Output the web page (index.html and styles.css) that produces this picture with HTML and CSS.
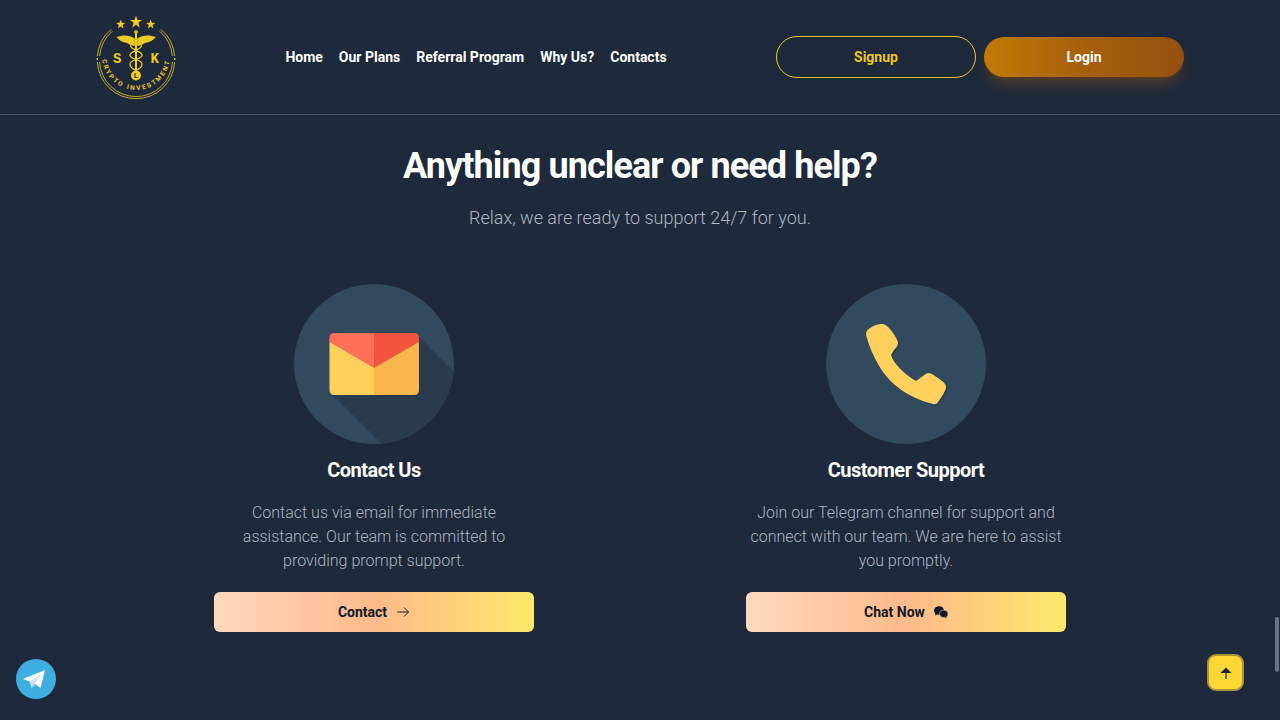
FILE: index.html
```html
<!DOCTYPE html>
<html lang="en">
<head>
<meta charset="utf-8">
<title>Support</title>
<link rel="stylesheet" href="styles.css">
</head>
<body>
<header class="header">
  <svg class="logo" viewBox="0 0 80 84" aria-label="SK Crypto Investment logo">
    <defs><path id="logo-arc" d="M6 41 A34 34 0 1 0 74 41"/></defs>
    <g fill="#eecb22">
      <polygon points="40,0.500 41.500,5 46,5 42.400,7.800 43.700,12.500 40,9.700 36.300,12.500 37.600,7.800 34,5 38.500,5"/>
      <polygon points="24.700,4.500 25.900,7.800 29.300,8 26.600,10.100 27.500,13.500 24.700,11.500 21.900,13.500 22.800,10.100 20.100,8 23.500,7.800"/>
      <polygon points="54.700,4.500 55.900,7.800 59.300,8 56.600,10.100 57.500,13.500 54.700,11.500 51.900,13.500 52.800,10.100 50.100,8 53.500,7.800"/>
      <path d="M20.500 22 C27 19.500 34 20 38.800 23.500 L38.800 31 C36 30.500 33 29.500 31 28 C27 27.500 23 25.500 20.500 22 Z"/>
      <path d="M60 22 C53 19.500 46 20 41.200 23.500 L41.200 31 C44 30.500 47 29.500 49 28 C53 27.500 57 25.500 60 22 Z"/>
      <rect x="39" y="17" width="2" height="40"/>
      <circle cx="40" cy="17" r="1.800"/>
      <circle cx="40" cy="60.500" r="5"/>
      <circle cx="1.300" cy="44" r="0.900"/>
      <circle cx="78.700" cy="44" r="0.900"/>
    </g>
    <g fill="none" stroke="#eecb22">
      <path stroke-width="1.300" d="M35 30 C32 34 46 36 46 40 C46 45 34 44 34 49 C34 52 37 54 39 55"/>
      <path stroke-width="1.300" d="M45 30 C48 34 34 36 34 40 C34 45 46 44 46 49 C46 52 43 54 41 55"/>
      <path stroke-width="0.800" d="M15 14.500 A38.700 38.700 0 0 0 1.350 41"/>
      <path stroke-width="0.800" d="M65 14.500 A38.700 38.700 0 0 1 78.650 41"/>
      <path stroke-width="0.800" d="M16.400 16.200 A36.500 36.500 0 0 0 3.550 41"/>
      <path stroke-width="0.800" d="M63.600 16.200 A36.500 36.500 0 0 1 76.450 41"/>
      <path stroke-width="0.800" d="M1.350 47 A38.700 38.700 0 0 0 78.650 47"/>
      <path stroke-width="0.800" d="M3.550 47 A36.500 36.500 0 0 0 76.450 47"/>
    </g>
    <text class="logo-letter" x="21.300" y="47.500">S</text>
    <text class="logo-letter" x="58.700" y="47.500">K</text>
    <text class="logo-ball" x="40" y="63">L</text>
    <text class="logo-arc-text"><textPath href="#logo-arc" startOffset="50%" text-anchor="middle">CRYPTO INVESTMENT</textPath></text>
  </svg>
  <nav class="nav">
    <a href="#">Home</a>
    <a href="#">Our Plans</a>
    <a href="#">Referral Program</a>
    <a href="#">Why Us?</a>
    <a href="#">Contacts</a>
  </nav>
  <div class="auth">
    <a class="btn-signup" href="#">Signup</a>
    <a class="btn-login" href="#">Login</a>
  </div>
</header>

<main class="main">
  <h1 class="title">Anything unclear or need help?</h1>
  <p class="subtitle">Relax, we are ready to support 24/7 for you.</p>
  <section class="cards">
    <article class="card">
      <svg class="card-icon" viewBox="0 0 160 160">
        <defs><clipPath id="disc"><circle cx="80" cy="80" r="80"/></clipPath></defs>
        <circle cx="80" cy="80" r="80" fill="#324a5e"/>
        <polygon clip-path="url(#disc)" fill="#2b3b4e" points="123,51 200,128 200,200 128,200 37,109"/>
        <path fill="#ffd15c" d="M80 55 L35.500 55 L35.500 106 Q35.500 111 40.500 111 L80 111 Z"/>
        <path fill="#f8b64c" d="M80 55 L125 55 L125 106 Q125 111 120 111 L80 111 Z"/>
        <path fill="#ff7058" d="M80 49 L40.500 49 Q35.500 49 35.500 54 L35.500 58 L80 84 Z"/>
        <path fill="#f1543f" d="M80 49 L120 49 Q125 49 125 54 L125 58 L80 84 Z"/>
      </svg>
      <h2 class="card-title">Contact Us</h2>
      <p class="card-text">Contact us via email for immediate assistance. Our team is committed to providing prompt support.</p>
      <a class="card-btn" href="#">Contact
        <svg class="btn-icon" viewBox="0 0 14 14"><path d="M1.500 7 H12.500 M8 2.500 L12.500 7 L8 11.500" fill="none" stroke="#111827" stroke-width="1"/></svg>
      </a>
    </article>
    <article class="card">
      <svg class="card-icon" viewBox="0 0 160 160">
        <circle cx="80" cy="80" r="80" fill="#324a5e"/>
        <path class="phone-shadow" d="M40 50 C40 47 42 45 45 43.500 C48 41.500 52 40 56 40 C59 40 61 42 63 44 C67 48 70 53 72 58 C72.500 61 70 64 68 66 L65 71 C68 80 78 90 90 97 C94 95 98 90 102 89 C106 89 112 94 116 97 C119 99 120 101 120 104 C119 108 115 114 112 118 C111 120 109 120.500 107 120 C88 115 68 105 55 85 C47 72 42 60 40 50 Z"/>
        <path fill="#ffd15c" d="M40 50 C40 47 42 45 45 43.500 C48 41.500 52 40 56 40 C59 40 61 42 63 44 C67 48 70 53 72 58 C72.500 61 70 64 68 66 L65 71 C68 80 78 90 90 97 C94 95 98 90 102 89 C106 89 112 94 116 97 C119 99 120 101 120 104 C119 108 115 114 112 118 C111 120 109 120.500 107 120 C88 115 68 105 55 85 C47 72 42 60 40 50 Z"/>
      </svg>
      <h2 class="card-title">Customer Support</h2>
      <p class="card-text">Join our Telegram channel for support and connect with our team. We are here to assist you promptly.</p>
      <a class="card-btn" href="#">Chat Now
        <svg class="btn-icon" viewBox="0 0 14 14"><ellipse cx="5" cy="5.500" rx="5" ry="4.300" fill="#111827"/><path d="M1.500 8 L1 10.500 L4 9 Z" fill="#111827"/><ellipse cx="9.800" cy="8.800" rx="4.200" ry="3.600" fill="#111827" stroke="#fdc78a" stroke-width="0.600"/><path d="M12 11 L13 13 L10 12 Z" fill="#111827"/></svg>
      </a>
    </article>
  </section>
</main>

<a class="telegram" href="#" aria-label="Telegram">
  <svg viewBox="0 0 40 40">
    <circle cx="20" cy="20" r="20" fill="#3eaee0"/>
    <path fill="#fff" d="M7 20 L29 11 L24.500 29 L19 25 L13.500 22.500 Z"/>
    <path fill="#cfe6f3" d="M13.500 22.500 L15.700 29 L18.500 25.500 L26 14.500 Z"/>
    <path fill="#a9d3ea" d="M15.700 29 L17 24.500 L19.500 26 Z"/>
  </svg>
</a>
<a class="to-top" href="#" aria-label="Back to top">
  <svg viewBox="0 0 14 14"><path d="M7 13 V6" stroke="#1f2937" stroke-width="1.200"/><path d="M1.500 7 L7 1.500 L12.500 7 Z" fill="#1f2937"/></svg>
</a>
<div class="scroll-thumb"></div>
</body>
</html>
```

FILE: styles.css
```css
* { box-sizing: border-box; }
html, body { height: 100%; }
body {
  margin: 0;
  overflow: hidden;
  background: #1e293b;
  font-family: Roboto, "Liberation Sans", sans-serif;
  color: #fff;
}
a { text-decoration: none; color: inherit; }

.header {
  height: 115px;
  padding: 0 96px;
  border-bottom: 1px solid #4b5563;
  display: flex;
  align-items: center;
  justify-content: space-between;
}
.logo { width: 80px; height: 84px; overflow: visible; }
.logo-letter { font: 700 14px "Liberation Mono", monospace; fill: #eecb22; text-anchor: middle; }
.logo-ball { font: 700 7px Roboto, sans-serif; fill: #1e293b; text-anchor: middle; }
.logo-arc-text { font: 700 6.500px Roboto, sans-serif; letter-spacing: 1.900px; fill: #eecb22; }

.nav { display: flex; gap: 16px; font-size: 14px; font-weight: 700; color: #fff; }
.auth { display: flex; gap: 8px; align-items: center; }
.btn-signup, .btn-login {
  width: 200px;
  display: flex;
  align-items: center;
  justify-content: center;
  font-size: 14px;
  font-weight: 700;
  border-radius: 21px;
}
.btn-signup { height: 42px; border: 1px solid #eac823; color: #eac823; }
.btn-login {
  height: 40px;
  color: #fff;
  background: linear-gradient(90deg, #c27a06 0%, #a6600c 50%, #95500f 100%);
  box-shadow: 0 10px 15px -3px rgba(180, 100, 10, .3), 0 4px 6px -4px rgba(180, 100, 10, .3);
}

.main { display: flex; flex-direction: column; align-items: center; }
.title { margin: 29px 0 0; font-size: 36px; line-height: 44px; font-weight: 700; letter-spacing: -0.900px; }
.subtitle { margin: 16px 0 0; font-size: 18px; line-height: 28px; font-weight: 300; color: #aeb5c0; }
.cards { margin-top: 52px; display: grid; grid-template-columns: 532px 532px; }
.card { display: flex; flex-direction: column; align-items: center; }
.card-icon { width: 160px; height: 160px; display: block; }
.phone-shadow { fill: #2c4053; transform: translate(1.500px, 1.500px); }
.card-title { margin: 12px 0 0; font-size: 20px; line-height: 28px; font-weight: 700; letter-spacing: -0.500px; }
.card-text { margin: 17px 0 0; width: 320px; text-align: center; font-size: 16px; line-height: 24px; font-weight: 300; color: #aeb5c0; }
.card-btn {
  margin-top: 19px;
  width: 320px;
  height: 40px;
  border-radius: 6px;
  display: flex;
  align-items: center;
  justify-content: center;
  gap: 9px;
  font-size: 14px;
  font-weight: 700;
  color: #111827;
  background: linear-gradient(90deg, #ffd9bf 0%, #fdba8c 50%, #fce96a 100%);
}
.btn-icon { width: 14px; height: 14px; }

.telegram { position: fixed; left: 16px; top: 659px; width: 40px; height: 40px; }
.telegram svg { display: block; width: 40px; height: 40px; }
.to-top {
  position: fixed;
  left: 1207px;
  top: 654px;
  width: 37px;
  height: 37px;
  border-radius: 9px;
  border: 2px solid #a8933a;
  background: #fdd835;
  display: flex;
  align-items: center;
  justify-content: center;
}
.to-top svg { width: 14px; height: 14px; }
.scroll-thumb { position: fixed; left: 1275px; top: 617px; width: 4px; height: 55px; border-radius: 2px; background: #64748b; }
```
